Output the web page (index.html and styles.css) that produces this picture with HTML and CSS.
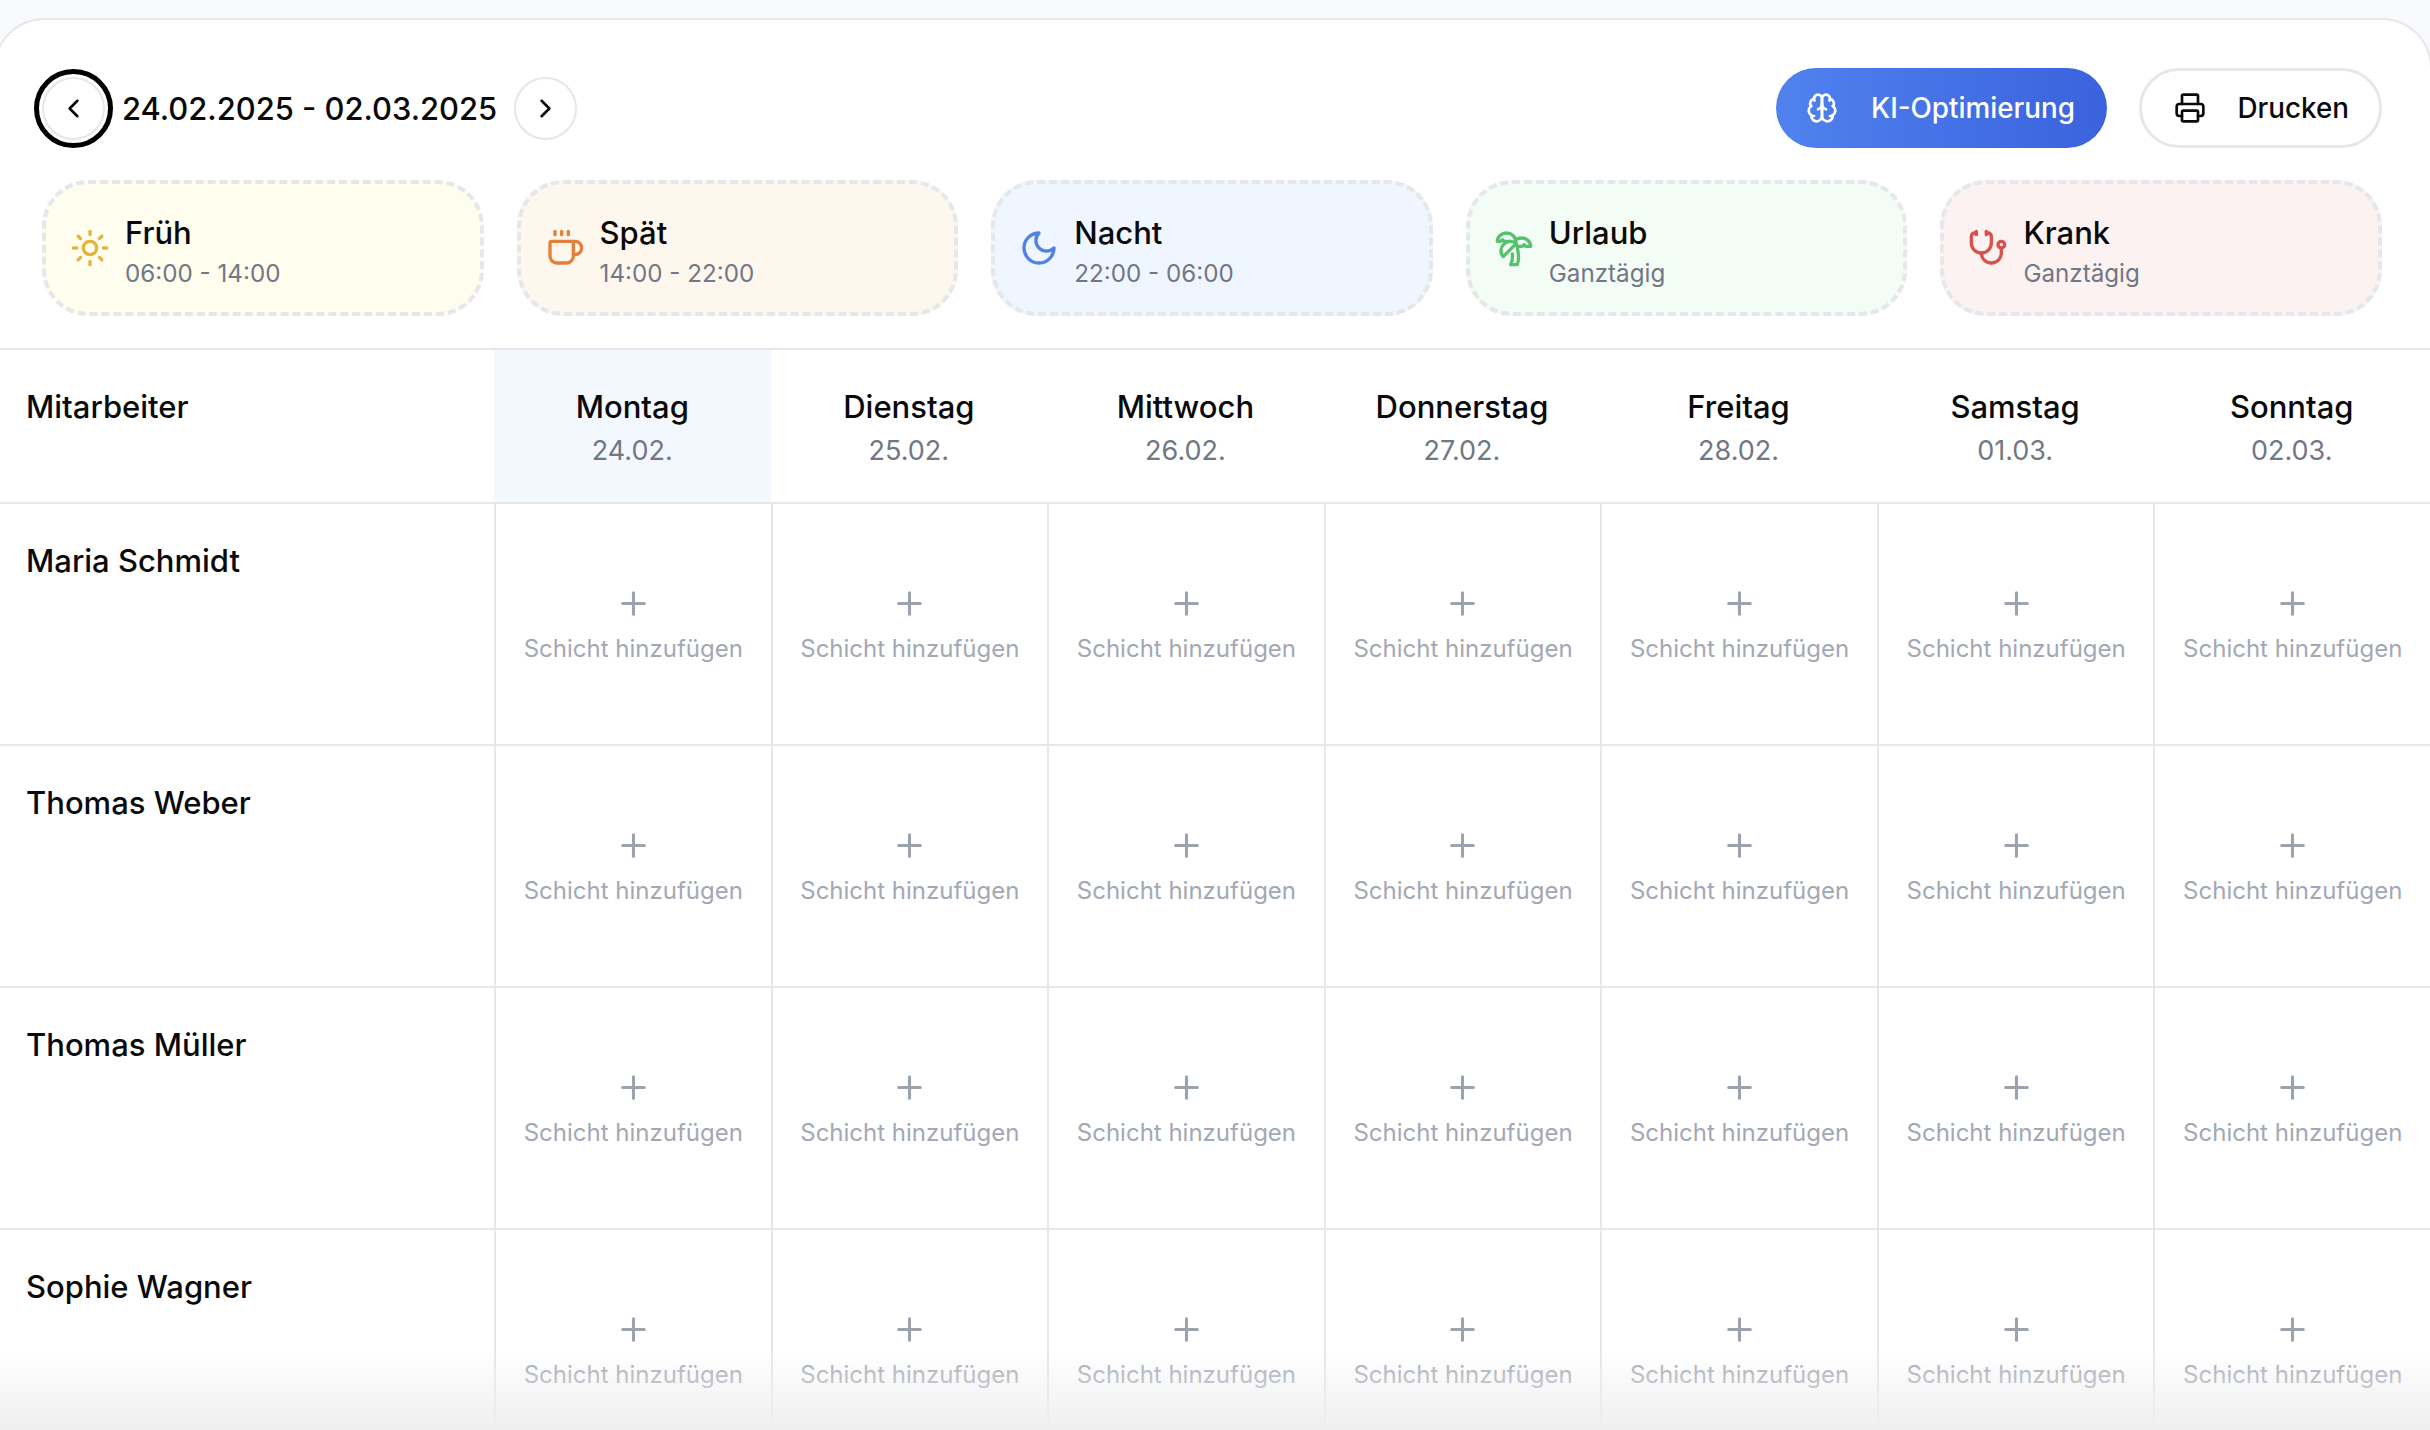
FILE: index.html
```html
<!DOCTYPE html>
<html lang="de">
<head>
    <meta charset="UTF-8">
    <meta name="viewport" content="width=device-width, initial-scale=1.0">
    <title>Schichtplan</title>
    <link rel="stylesheet" href="styles.css">
</head>
<body>
<svg class="sprite" width="0" height="0">
    <symbol id="plus" viewBox="0 0 24 24"><path d="M5 12h14"/><path d="M12 5v14"/></symbol>
</svg>

<div class="page">
    <div class="card">
        <div class="toolbar">
            <div class="week-nav">
                <button class="round-btn focused">
                    <svg class="icon chevron" viewBox="0 0 24 24"><path d="m15 18-6-6 6-6"/></svg>
                </button>
                <span class="week-label">24.02.2025 - 02.03.2025</span>
                <button class="round-btn">
                    <svg class="icon chevron" viewBox="0 0 24 24"><path d="m9 18 6-6-6-6"/></svg>
                </button>
            </div>
            <div class="actions">
                <button class="pill-btn primary">
                    <svg class="icon btn-icon" viewBox="0 0 24 24">
                        <path d="M12 5a3 3 0 1 0-5.997.125 4 4 0 0 0-2.526 5.77 4 4 0 0 0 .556 6.588A4 4 0 1 0 12 18Z"/>
                        <path d="M12 5a3 3 0 1 1 5.997.125 4 4 0 0 1 2.526 5.77 4 4 0 0 1-.556 6.588A4 4 0 1 1 12 18Z"/>
                        <path d="M15 13a4.5 4.5 0 0 1-3-4 4.5 4.5 0 0 1-3 4"/>
                        <path d="M17.599 6.5a3 3 0 0 0 .399-1.375"/>
                        <path d="M6.003 5.125A3 3 0 0 0 6.401 6.5"/>
                        <path d="M3.477 10.896a4 4 0 0 1 .585-.396"/>
                        <path d="M19.938 10.5a4 4 0 0 1 .585.396"/>
                        <path d="M6 18a4 4 0 0 1-1.967-.516"/>
                        <path d="M19.967 17.484A4 4 0 0 1 18 18"/>
                    </svg>
                    KI-Optimierung
                </button>
                <button class="pill-btn outline">
                    <svg class="icon btn-icon" viewBox="0 0 24 24">
                        <path d="M6 18H4a2 2 0 0 1-2-2v-5a2 2 0 0 1 2-2h16a2 2 0 0 1 2 2v5a2 2 0 0 1-2 2h-2"/>
                        <path d="M6 9V3a1 1 0 0 1 1-1h10a1 1 0 0 1 1 1v6"/>
                        <rect x="6" y="14" width="12" height="8" rx="1"/>
                    </svg>
                    Drucken
                </button>
            </div>
        </div>

        <div class="legend">
            <div class="shift shift-early">
                <svg class="icon shift-icon" viewBox="0 0 24 24">
                    <circle cx="12" cy="12" r="4"/>
                    <path d="M12 2v2"/><path d="M12 20v2"/><path d="m4.93 4.93 1.41 1.41"/><path d="m17.66 17.66 1.41 1.41"/>
                    <path d="M2 12h2"/><path d="M20 12h2"/><path d="m6.34 17.66-1.41 1.41"/><path d="m19.07 4.93-1.41 1.41"/>
                </svg>
                <div class="shift-text"><div class="shift-name">Früh</div><div class="shift-time">06:00 - 14:00</div></div>
            </div>
            <div class="shift shift-late">
                <svg class="icon shift-icon" viewBox="0 0 24 24">
                    <path d="M10 2v2"/><path d="M14 2v2"/><path d="M6 2v2"/>
                    <path d="M16 8a1 1 0 0 1 1 1v8a4 4 0 0 1-4 4H7a4 4 0 0 1-4-4V9a1 1 0 0 1 1-1h14a4 4 0 1 1 0 8h-1"/>
                </svg>
                <div class="shift-text"><div class="shift-name">Spät</div><div class="shift-time">14:00 - 22:00</div></div>
            </div>
            <div class="shift shift-night">
                <svg class="icon shift-icon" viewBox="0 0 24 24"><path d="M12 3a6 6 0 0 0 9 9 9 9 0 1 1-9-9Z"/></svg>
                <div class="shift-text"><div class="shift-name">Nacht</div><div class="shift-time">22:00 - 06:00</div></div>
            </div>
            <div class="shift shift-holiday">
                <svg class="icon shift-icon" viewBox="0 0 24 24">
                    <path d="M13 8c0-2.76-2.46-5-5.5-5S2 5.24 2 8h2l1-1 1 1h4"/>
                    <path d="M13 7.14A5.82 5.82 0 0 1 16.5 6c3.04 0 5.5 2.24 5.5 5h-3l-1-1-1 1h-3"/>
                    <path d="M5.89 9.71c-2.15 2.15-2.3 5.47-.35 7.43l4.24-4.25.7-.7.71-.71 2.12-2.12c-1.95-1.96-5.27-1.8-7.42.35"/>
                    <path d="M11 15.5c.5 2.5-.17 4.5-1 6.5h4c2-5.5-.5-12-1-14"/>
                </svg>
                <div class="shift-text"><div class="shift-name">Urlaub</div><div class="shift-time">Ganztägig</div></div>
            </div>
            <div class="shift shift-sick">
                <svg class="icon shift-icon" viewBox="0 0 24 24">
                    <path d="M11 2v2"/><path d="M5 2v2"/>
                    <path d="M5 3H4a2 2 0 0 0-2 2v4a6 6 0 0 0 12 0V5a2 2 0 0 0-2-2h-1"/>
                    <path d="M8 15a6 6 0 0 0 12 0v-3"/>
                    <circle cx="20" cy="10" r="2"/>
                </svg>
                <div class="shift-text"><div class="shift-name">Krank</div><div class="shift-time">Ganztägig</div></div>
            </div>
        </div>

        <div class="schedule">
            <div class="row head-row">
                <div class="name-cell">Mitarbeiter</div>
                <div class="day today"><div class="day-name">Montag</div><div class="day-date">24.02.</div></div>
                <div class="day"><div class="day-name">Dienstag</div><div class="day-date">25.02.</div></div>
                <div class="day"><div class="day-name">Mittwoch</div><div class="day-date">26.02.</div></div>
                <div class="day"><div class="day-name">Donnerstag</div><div class="day-date">27.02.</div></div>
                <div class="day"><div class="day-name">Freitag</div><div class="day-date">28.02.</div></div>
                <div class="day"><div class="day-name">Samstag</div><div class="day-date">01.03.</div></div>
                <div class="day"><div class="day-name">Sonntag</div><div class="day-date">02.03.</div></div>
            </div>

            <div class="row">
                <div class="name-cell">Maria Schmidt</div>
                <div class="slot"><svg class="icon add"><use href="#plus"/></svg>Schicht hinzufügen</div>
                <div class="slot"><svg class="icon add"><use href="#plus"/></svg>Schicht hinzufügen</div>
                <div class="slot"><svg class="icon add"><use href="#plus"/></svg>Schicht hinzufügen</div>
                <div class="slot"><svg class="icon add"><use href="#plus"/></svg>Schicht hinzufügen</div>
                <div class="slot"><svg class="icon add"><use href="#plus"/></svg>Schicht hinzufügen</div>
                <div class="slot"><svg class="icon add"><use href="#plus"/></svg>Schicht hinzufügen</div>
                <div class="slot"><svg class="icon add"><use href="#plus"/></svg>Schicht hinzufügen</div>
            </div>
            <div class="row">
                <div class="name-cell">Thomas Weber</div>
                <div class="slot"><svg class="icon add"><use href="#plus"/></svg>Schicht hinzufügen</div>
                <div class="slot"><svg class="icon add"><use href="#plus"/></svg>Schicht hinzufügen</div>
                <div class="slot"><svg class="icon add"><use href="#plus"/></svg>Schicht hinzufügen</div>
                <div class="slot"><svg class="icon add"><use href="#plus"/></svg>Schicht hinzufügen</div>
                <div class="slot"><svg class="icon add"><use href="#plus"/></svg>Schicht hinzufügen</div>
                <div class="slot"><svg class="icon add"><use href="#plus"/></svg>Schicht hinzufügen</div>
                <div class="slot"><svg class="icon add"><use href="#plus"/></svg>Schicht hinzufügen</div>
            </div>
            <div class="row">
                <div class="name-cell">Thomas Müller</div>
                <div class="slot"><svg class="icon add"><use href="#plus"/></svg>Schicht hinzufügen</div>
                <div class="slot"><svg class="icon add"><use href="#plus"/></svg>Schicht hinzufügen</div>
                <div class="slot"><svg class="icon add"><use href="#plus"/></svg>Schicht hinzufügen</div>
                <div class="slot"><svg class="icon add"><use href="#plus"/></svg>Schicht hinzufügen</div>
                <div class="slot"><svg class="icon add"><use href="#plus"/></svg>Schicht hinzufügen</div>
                <div class="slot"><svg class="icon add"><use href="#plus"/></svg>Schicht hinzufügen</div>
                <div class="slot"><svg class="icon add"><use href="#plus"/></svg>Schicht hinzufügen</div>
            </div>
            <div class="row">
                <div class="name-cell">Sophie Wagner</div>
                <div class="slot"><svg class="icon add"><use href="#plus"/></svg>Schicht hinzufügen</div>
                <div class="slot"><svg class="icon add"><use href="#plus"/></svg>Schicht hinzufügen</div>
                <div class="slot"><svg class="icon add"><use href="#plus"/></svg>Schicht hinzufügen</div>
                <div class="slot"><svg class="icon add"><use href="#plus"/></svg>Schicht hinzufügen</div>
                <div class="slot"><svg class="icon add"><use href="#plus"/></svg>Schicht hinzufügen</div>
                <div class="slot"><svg class="icon add"><use href="#plus"/></svg>Schicht hinzufügen</div>
                <div class="slot"><svg class="icon add"><use href="#plus"/></svg>Schicht hinzufügen</div>
            </div>
        </div>
    </div>
    <div class="bottom-fade"></div>
</div>
</body>
</html>
```

FILE: styles.css
```css
* {
    box-sizing: border-box;
}

html, body {
    margin: 0;
    height: 100%;
    overflow: hidden;
}

body {
    background: #f8fafd;
    font-family: Inter, "Liberation Sans", sans-serif;
    color: #0a0a0a;
}

.sprite {
    position: absolute;
}

.page {
    position: relative;
    height: 1430px;
    padding-top: 18px;
    overflow: hidden;
}

.card {
    margin-left: -6px;
    width: 2438px;
    background: #fff;
    border-top: 2px solid #e5e7eb;
    border-left: 2px solid #e5e7eb;
    border-right: 2px solid #e5e7eb;
    border-radius: 50px 50px 0 0;
}

.icon {
    fill: none;
    stroke: currentColor;
    stroke-width: 2;
    stroke-linecap: round;
    stroke-linejoin: round;
    flex-shrink: 0;
}

/* top bar */
.toolbar {
    display: flex;
    justify-content: space-between;
    align-items: center;
    height: 80px;
    margin-top: 48px;
    padding: 0 48px 0 46px;
}

.week-nav {
    display: flex;
    align-items: center;
    gap: 17px;
}

.week-label {
    font-size: 30.9px;
    font-weight: 500;
    white-space: nowrap;
}

.round-btn {
    display: flex;
    align-items: center;
    justify-content: center;
    width: 63px;
    height: 63px;
    padding: 0;
    background: #fff;
    color: #0a0a0a;
    border: 2px solid #e5e7eb;
    border-radius: 50%;
}

.round-btn.focused {
    outline: 5px solid #000;
    outline-offset: 3px;
}

.chevron {
    width: 31px;
    height: 31px;
}

.actions {
    display: flex;
    gap: 32px;
}

.pill-btn {
    display: flex;
    align-items: center;
    gap: 33px;
    height: 80px;
    padding: 0 32px;
    font-family: inherit;
    font-size: 27.8px;
    font-weight: 500;
    border-radius: 40px;
    white-space: nowrap;
}

.btn-icon {
    width: 32px;
    height: 32px;
}

.primary {
    padding-left: 30px;
    color: #fff;
    border: 0;
    background: linear-gradient(90deg, #5082ef, #3a62dd);
}

.outline {
    gap: 31.5px;
    padding-right: 30px;
    color: #0a0a0a;
    background: #fff;
    border: 3px solid #e5e7eb;
}

/* shift legend */
.legend {
    display: grid;
    grid-template-columns: repeat(5, 1fr);
    gap: 33px;
    margin-top: 32px;
    padding: 0 48px 0 46px;
}

.shift {
    display: flex;
    align-items: center;
    gap: 15px;
    height: 136px;
    padding: 0 24px;
    border: 4px dashed #e5e7eb;
    border-radius: 46px;
}

.shift-text {
    padding-top: 6px;
}

.shift-name {
    font-size: 31px;
    font-weight: 500;
    line-height: 40px;
}

.shift-time {
    margin-top: 5px;
    font-size: 24.2px;
    line-height: 32px;
    color: #717784;
}

.shift-icon {
    width: 40px;
    height: 40px;
}

.shift-early { background: #fefdee; }
.shift-early .shift-icon { color: #e2b53f; }
.shift-late { background: #fef7ee; }
.shift-late .shift-icon { color: #e57f3c; }
.shift-night { background: #f0f6ff; }
.shift-night .shift-icon { color: #4f81ea; }
.shift-holiday { background: #f3fdf6; }
.shift-holiday .shift-icon { color: #56c26e; }
.shift-sick { background: #fcf2f2; }
.shift-sick .shift-icon { color: #d9504c; }

/* schedule table */
.schedule {
    margin-top: 32px;
    border-top: 2px solid #e5e7eb;
}

.row {
    display: grid;
    grid-template-columns: 498px repeat(7, 1fr);
    height: 242px;
    border-bottom: 2px solid #e5e7eb;
}

.head-row {
    height: 154px;
}

.name-cell {
    padding: 37px 0 0 30px;
    font-size: 31px;
    font-weight: 500;
    line-height: 40px;
}

.day {
    padding-top: 37px;
    text-align: center;
}

.day.today {
    background: #f3f7fe;
}

.day-name {
    font-size: 31px;
    font-weight: 500;
    line-height: 40px;
}

.day-date {
    margin-top: 8px;
    font-size: 27px;
    line-height: 32px;
    color: #717784;
}

.slot {
    display: flex;
    flex-direction: column;
    align-items: center;
    justify-content: center;
    gap: 11px;
    padding-top: 2px;
    border-left: 2px solid #e5e7eb;
    font-size: 24px;
    line-height: 32px;
    color: #a3a8b4;
}

.add {
    width: 37px;
    height: 37px;
    color: #9ca3af;
}

.bottom-fade {
    position: absolute;
    left: 0;
    right: 0;
    bottom: 0;
    height: 80px;
    background: linear-gradient(180deg, rgba(240, 240, 240, 0), #efefef);
    pointer-events: none;
}
```
